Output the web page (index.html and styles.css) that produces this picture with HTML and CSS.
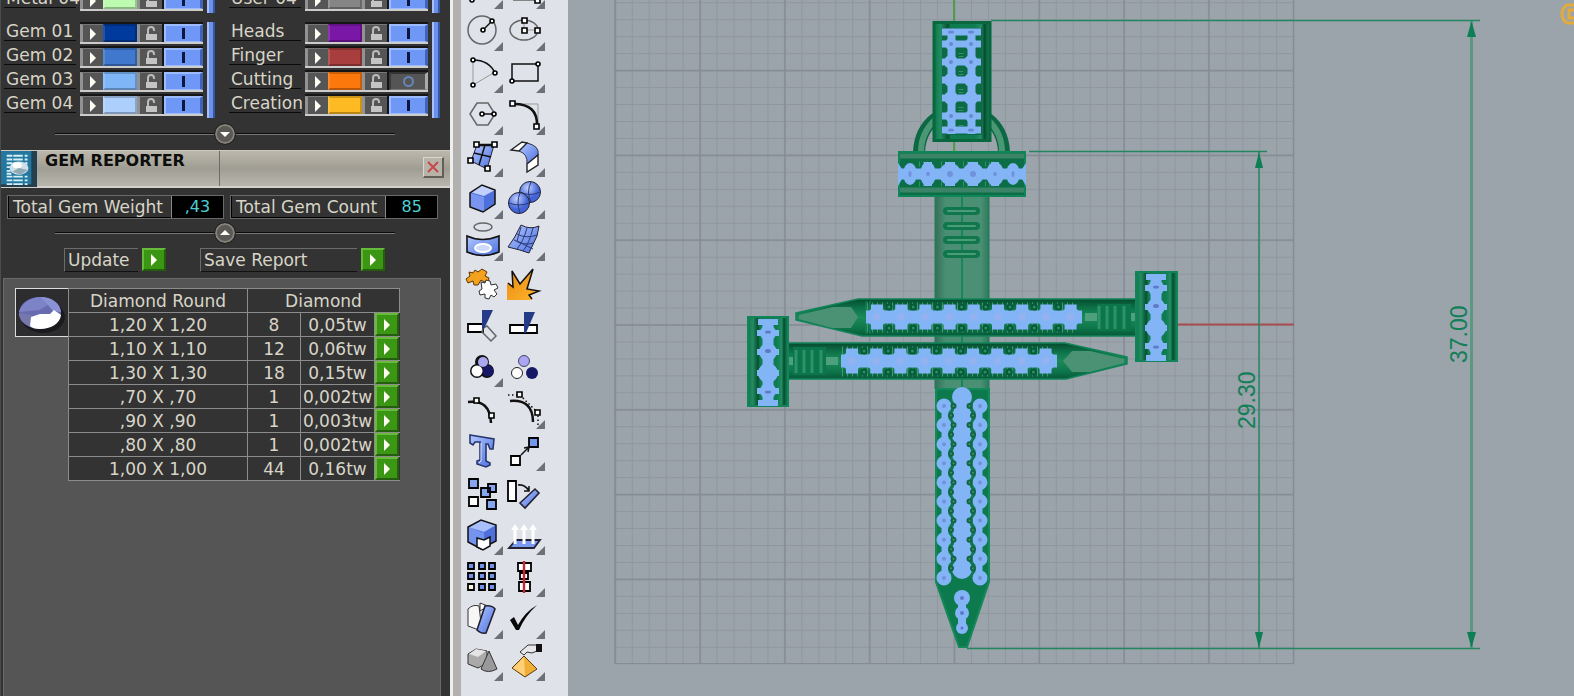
FILE: index.html
```html
<!DOCTYPE html>
<html lang="en">
<head>
<meta charset="utf-8">
<title>Gem Reporter</title>
<link rel="stylesheet" href="styles.css">
</head>
<body>
<svg class="defs" aria-hidden="true">
  <symbol id="lock" viewBox="0 0 14 16"><path d="M4 8V4a3 3 0 0 1 6 0v1" fill="none" stroke="#bbb" stroke-width="2"/><path d="M2 8h11v6H2z" fill="#c4c4c4"/></symbol>
  <symbol id="tri" viewBox="0 0 8 12"><path d="M1 0l6 6-6 6z" fill="#fffff4"/></symbol>
  <linearGradient id="blue" x2="1" y2="1"><stop offset="0" stop-color="#b4c8ff"/><stop offset="1" stop-color="#4a6fe0"/></linearGradient>
  <linearGradient id="gold" x2="1" y2="1"><stop offset="0" stop-color="#e98a14"/><stop offset="1" stop-color="#ffb52a"/></linearGradient>
  <radialGradient id="ball" cx=".4" cy=".3"><stop offset="0" stop-color="#c3d2ff"/><stop offset="1" stop-color="#4163d6"/></radialGradient>
</svg>
<div class="app">
  <aside class="panel">
    <section class="layers">
      <div class="col">
        <div class="group">
          <div class="rows">
            <div class="row"><span class="name">Metal 04</span><div class="ctl"><button class="key" aria-label="Select Metal 04"><svg><use href="#tri"/></svg></button><button class="swatch mint" aria-label="Metal 04 colour"></button><button class="key lock" aria-label="Lock Metal 04"><svg><use href="#lock"/></svg></button><button class="toggle" aria-label="Show Metal 04"><i></i></button></div></div>
          </div><span class="bar"></span>
        </div>
        <div class="group">
          <div class="rows">
            <div class="row"><span class="name">Gem 01</span><div class="ctl"><button class="key" aria-label="Select Gem 01"><svg><use href="#tri"/></svg></button><button class="swatch navy" aria-label="Gem 01 colour"></button><button class="key lock" aria-label="Lock Gem 01"><svg><use href="#lock"/></svg></button><button class="toggle" aria-label="Show Gem 01"><i></i></button></div></div>
            <div class="row"><span class="name">Gem 02</span><div class="ctl"><button class="key" aria-label="Select Gem 02"><svg><use href="#tri"/></svg></button><button class="swatch royal" aria-label="Gem 02 colour"></button><button class="key lock" aria-label="Lock Gem 02"><svg><use href="#lock"/></svg></button><button class="toggle" aria-label="Show Gem 02"><i></i></button></div></div>
            <div class="row"><span class="name">Gem 03</span><div class="ctl"><button class="key" aria-label="Select Gem 03"><svg><use href="#tri"/></svg></button><button class="swatch sky" aria-label="Gem 03 colour"></button><button class="key lock" aria-label="Lock Gem 03"><svg><use href="#lock"/></svg></button><button class="toggle" aria-label="Show Gem 03"><i></i></button></div></div>
            <div class="row"><span class="name">Gem 04</span><div class="ctl"><button class="key" aria-label="Select Gem 04"><svg><use href="#tri"/></svg></button><button class="swatch pale" aria-label="Gem 04 colour"></button><button class="key lock" aria-label="Lock Gem 04"><svg><use href="#lock"/></svg></button><button class="toggle" aria-label="Show Gem 04"><i></i></button></div></div>
          </div><span class="bar"></span>
        </div>
      </div>
      <div class="col">
        <div class="group">
          <div class="rows">
            <div class="row"><span class="name">User 04</span><div class="ctl"><button class="key" aria-label="Select User 04"><svg><use href="#tri"/></svg></button><button class="swatch gray" aria-label="User 04 colour"></button><button class="key lock" aria-label="Lock User 04"><svg><use href="#lock"/></svg></button><button class="toggle" aria-label="Show User 04"><i></i></button></div></div>
          </div><span class="bar"></span>
        </div>
        <div class="group">
          <div class="rows">
            <div class="row"><span class="name">Heads</span><div class="ctl"><button class="key" aria-label="Select Heads"><svg><use href="#tri"/></svg></button><button class="swatch purple" aria-label="Heads colour"></button><button class="key lock" aria-label="Lock Heads"><svg><use href="#lock"/></svg></button><button class="toggle" aria-label="Show Heads"><i></i></button></div></div>
            <div class="row"><span class="name">Finger</span><div class="ctl"><button class="key" aria-label="Select Finger"><svg><use href="#tri"/></svg></button><button class="swatch brick" aria-label="Finger colour"></button><button class="key lock" aria-label="Lock Finger"><svg><use href="#lock"/></svg></button><button class="toggle" aria-label="Show Finger"><i></i></button></div></div>
            <div class="row"><span class="name">Cutting</span><div class="ctl"><button class="key" aria-label="Select Cutting"><svg><use href="#tri"/></svg></button><button class="swatch orange" aria-label="Cutting colour"></button><button class="key lock" aria-label="Lock Cutting"><svg><use href="#lock"/></svg></button><button class="toggle off" aria-label="Show Cutting"><i></i></button></div></div>
            <div class="row"><span class="name">Creation</span><div class="ctl"><button class="key" aria-label="Select Creation"><svg><use href="#tri"/></svg></button><button class="swatch amber" aria-label="Creation colour"></button><button class="key lock" aria-label="Lock Creation"><svg><use href="#lock"/></svg></button><button class="toggle" aria-label="Show Creation"><i></i></button></div></div>
          </div><span class="bar"></span>
        </div>
      </div>
    </section>
    <div class="divider"><button class="knob" aria-label="Expand layers"><svg viewBox="0 0 16 16"><path d="M3 6h10l-5 5z" fill="#fffff4"/></svg></button></div>

    <header class="title">
      <svg class="logo" viewBox="0 0 38 38"><path d="M0 0h38v38H0z" fill="#24789f"/><path d="M32 0h6v38H0v-3h32z" fill="#24404f"/><path d="M6 5h22M6 9h22M6 13h22M6 27h22M6 31h22M6 35h22" stroke="#d4f0f8" stroke-width="2" stroke-dasharray="6 1 10 2"/><path d="M6 17h5M6 21h4M6 24h5" stroke="#d4f0f8" stroke-width="2"/><ellipse cx="19" cy="18" rx="10" ry="7" fill="#cfdfe6"/><ellipse cx="17" cy="15" rx="5" ry="3" fill="#fff"/><path d="M12 22l7-4 9 2-7 5z" fill="#8fa9b5"/></svg>
      <h1>GEM REPORTER</h1>
      <button class="close" aria-label="Close"><svg viewBox="0 0 18 18"><path d="M4 4l10 10M14 4L4 14" stroke="#c8474c" stroke-width="2"/></svg></button>
    </header>
    <div class="stats">
      <div class="stat"><span>Total Gem Weight</span><output>,43</output></div>
      <div class="stat"><span>Total Gem Count</span><output>85</output></div>
    </div>
    <div class="divider low"><button class="knob" aria-label="Collapse totals"><svg viewBox="0 0 16 16"><path d="M3 10h10l-5-5z" fill="#fffff4"/></svg></button></div>
    <div class="actions">
      <label class="act" for="update">Update</label><button class="play" id="update"><svg><use href="#tri"/></svg></button>
      <label class="act wide" for="save">Save Report</label><button class="play" id="save"><svg><use href="#tri"/></svg></button>
    </div>
    <section class="report">
      <div class="thumb"><svg viewBox="0 0 50 46"><ellipse cx="27" cy="28" rx="22" ry="16" fill="#1b1b1f"/><ellipse cx="24" cy="24" rx="21" ry="16" fill="#686bb0"/><path d="M3 23c3-9 10-14 21-15l8 8-9 5z" fill="#7c83c6"/><path d="M24 8c12 0 20 6 21 15l-8-1-5-6z" fill="#8a93d6"/><path d="M3 24l13 2v12C8 36 3 31 3 24z" fill="#7478ac"/><path d="M15 28l9-3 10 0 4-4 7 5c-1 9-11 14-21 14-5 0-8-1-10-3z" fill="#fff"/></svg></div>
      <table>
        <colgroup><col class="c1"><col class="c2"><col class="c3"><col class="c4"></colgroup>
        <thead><tr><th>Diamond Round</th><th colspan="3">Diamond</th></tr></thead>
        <tbody>
          <tr><td>1,20 X 1,20</td><td>8</td><td>0,05tw</td><td class="go"><button class="play" aria-label="Show 1,20"><svg><use href="#tri"/></svg></button></td></tr>
          <tr><td>1,10 X 1,10</td><td>12</td><td>0,06tw</td><td class="go"><button class="play" aria-label="Show 1,10"><svg><use href="#tri"/></svg></button></td></tr>
          <tr><td>1,30 X 1,30</td><td>18</td><td>0,15tw</td><td class="go"><button class="play" aria-label="Show 1,30"><svg><use href="#tri"/></svg></button></td></tr>
          <tr><td>,70 X ,70</td><td>1</td><td>0,002tw</td><td class="go"><button class="play" aria-label="Show ,70"><svg><use href="#tri"/></svg></button></td></tr>
          <tr><td>,90 X ,90</td><td>1</td><td>0,003tw</td><td class="go"><button class="play" aria-label="Show ,90"><svg><use href="#tri"/></svg></button></td></tr>
          <tr><td>,80 X ,80</td><td>1</td><td>0,002tw</td><td class="go"><button class="play" aria-label="Show ,80"><svg><use href="#tri"/></svg></button></td></tr>
          <tr><td>1,00 X 1,00</td><td>44</td><td>0,16tw</td><td class="go"><button class="play" aria-label="Show 1,00"><svg><use href="#tri"/></svg></button></td></tr>
        </tbody>
      </table>
    </section>
  </aside>

  <nav class="tools" aria-label="Modelling tools">
    <button class="fly" aria-label="Curve"><svg viewBox="0 0 42 42"><path d="M11 32C18 22 24 26 30 16" class="l"/><circle cx="11" cy="33" r="2" class="n"/></svg></button>
    <button class="fly" aria-label="Arc"><svg viewBox="0 0 42 42"><path d="M10 33h25" class="t"/><path d="M32 31h5v5h-5z" class="n"/></svg></button>
    <button class="fly" aria-label="Circle"><svg viewBox="0 0 42 42"><circle cx="21" cy="21" r="14" class="t"/><path d="M22 21l9-9" class="m"/><circle cx="22" cy="21" r="2" class="n"/><circle cx="31" cy="12" r="2" class="n"/></svg></button>
    <button class="fly" aria-label="Ellipse"><svg viewBox="0 0 42 42"><ellipse cx="21" cy="21" rx="14" ry="10" class="t"/><path d="M21 21V11M21 21h14" class="t2"/><path d="M19 19h5v5h-5zM19 9h5v5h-5zM32 19h5v5h-5z" class="n"/></svg></button>
    <button class="fly" aria-label="Arc from centre"><svg viewBox="0 0 42 42"><path d="M12 9v25l22-13" class="t2"/><path d="M12 9q16 0 22 13" class="m"/><circle cx="12" cy="9" r="2" class="n"/><circle cx="12" cy="34" r="2" class="n"/><circle cx="34" cy="22" r="2" class="n"/></svg></button>
    <button class="fly" aria-label="Rectangle"><svg viewBox="0 0 42 42"><path d="M9 13h26v17H9z" class="m"/><circle cx="9" cy="30" r="2" class="n"/><circle cx="35" cy="13" r="2" class="n"/></svg></button>
    <button class="fly" aria-label="Polygon"><svg viewBox="0 0 42 42"><path d="M9 21l7-11h11l7 11-7 11H16z" class="t"/><path d="M21 21h12" class="m"/><circle cx="21" cy="21" r="2" class="n"/><circle cx="33" cy="21" r="2" class="n"/></svg></button>
    <button class="fly" aria-label="Fillet"><svg viewBox="0 0 42 42"><path d="M12 11h23v22" class="t2"/><path d="M11 11q24 0 23 22" class="b"/><path d="M7 8h5v5H7zM31 31h5v5h-5z" class="n"/></svg></button>
    <button class="fly" aria-label="Surface from points"><svg viewBox="0 0 42 42"><path d="M16 10h17l-7 24-16-8z" fill="url(#blue)" stroke="#223"/><path d="M24 10l-6 20M13 18l17 4" class="m"/><path d="M15 10h18" class="b"/><path d="M13 7h5v5h-5zM31 7h5v5h-5zM7 23h5v5H7zM24 31h5v5h-5z" class="n"/></svg></button>
    <button class="fly" aria-label="Loft"><svg viewBox="0 0 42 42"><path d="M16 16l8-8q13 3 11 12l-11 9q1-10-8-13z" fill="url(#blue)" stroke="#334"/><path d="M8 15l11-8 5 1-8 8z" fill="#fff" stroke="#222" stroke-width="1.4"/><path d="M24 29l11-9v10l-11 7z" fill="#fff" stroke="#222" stroke-width="1.4"/></svg></button>
    <button class="fly" aria-label="Box"><svg viewBox="0 0 42 42"><path d="M9 16v14l12 5 13-8V14L21 8z" fill="#4e70dd"/><path d="M9 15l14 4 11-6-13-5z" fill="#c2d0fc"/><path d="M9 16l14 4v15L9 30z" fill="#7995f0"/><path d="M9 16v14l13 5 12-8V13L21 8z" class="m"/></svg></button>
    <button class="fly" aria-label="Spheres"><svg viewBox="0 0 42 42"><circle cx="27" cy="15" r="10.5" fill="url(#ball)" stroke="#223"/><path d="M17 15q10 5 20 0M28 5q-5 10 0 20" class="g"/><circle cx="16" cy="26" r="10.500" fill="url(#ball)" stroke="#223"/><path d="M6 26q10 4 20 0M17 16q-4 9 0 20" class="g"/></svg></button>
    <button class="fly" aria-label="Project"><svg viewBox="0 0 42 42"><ellipse cx="22" cy="8" rx="9" ry="4" class="t"/><path d="M6 17q15 7 32 0v16q-16 7-32 0z" fill="url(#blue)" stroke="#111" stroke-width="1.6"/><ellipse cx="22" cy="29" rx="8" ry="4" fill="#cddafd" stroke="#fff" stroke-width="2"/></svg></button>
    <button class="fly" aria-label="Mesh"><svg viewBox="0 0 42 42"><path d="M18 6q9 5 18 1l-2 10-8 17q-8-3-21-6 7-9 13-22z" fill="url(#blue)" stroke="#223"/><path d="M14 15q9 5 20 1M11 21q10 6 19 3M24 9q-4 14-10 21M30 9q-4 16-10 23M18 8l-4 14 16 8" class="g"/></svg></button>
    <button aria-label="Join"><svg viewBox="0 0 42 42"><path d="M14 9l3 2 4-3 5 3-2 4 4 2-1 4-4 0-3-2-3 5-4 0-1-4-5 2-2-4 4-3-1-4 4 1z" fill="#f4a11e" stroke="#5a3500"/><path d="M20 21l4 1 1-3 4 1 1 4 5-1 2 4-4 2 3 4-3 3-3-2-2 4-4-1 0-4-5 1-1-4 3-2z" fill="#fff" stroke="#333"/></svg></button>
    <button aria-label="Explode"><svg viewBox="0 0 42 42"><path d="M4 39V22l6 4-1-16 8 13 13-15-6 20 12 2-10 4 3 5z" fill="url(#gold)"/><path d="M5 22l5 4-1-16 8 13 13-15-6 20 12 2-10 4 3 4" class="m"/></svg></button>
    <button aria-label="Trim"><svg viewBox="0 0 42 42"><path d="M7 21h15v8H7z" fill="#fff" stroke="#000" stroke-width="1.8"/><path d="M22 25l4-2 9 10-5 5-9-9z" class="t"/><path d="M21 7h11l-9 19-2-1z" fill="#253b88"/></svg></button>
    <button aria-label="Split"><svg viewBox="0 0 42 42"><path d="M7 22h27v8H7z" fill="#fff" stroke="#000" stroke-width="1.8"/><path d="M21 9h11l-9 21h-2z" fill="#253b88"/></svg></button>
    <button class="fly" aria-label="Boolean union"><svg viewBox="0 0 42 42"><g stroke="#111" stroke-width="4"><circle cx="21" cy="17" r="5"/><circle cx="16" cy="26" r="5"/><circle cx="26" cy="26" r="5"/></g><circle cx="27" cy="26" r="5.500" fill="#171768"/><circle cx="16" cy="26" r="5.500" fill="#fff"/><circle cx="22" cy="17" r="5" fill="#aaa6f2"/></svg></button>
    <button aria-label="Boolean split"><svg viewBox="0 0 42 42"><circle cx="21" cy="16" r="5.5" fill="#aaa6f2" stroke="#446"/><circle cx="14" cy="28" r="5.5" fill="#fff" stroke="#222"/><circle cx="29" cy="28" r="6" fill="#171768"/></svg></button>
    <button aria-label="Edit points"><svg viewBox="0 0 42 42"><path d="M7 15q22-3 23 21" class="b"/><path d="M13 11h5v5h-5zM28 26h5v5h-5z" class="n"/></svg></button>
    <button class="fly" aria-label="Control points"><svg viewBox="0 0 42 42"><path d="M7 14q23-2 23 21" class="b"/><path d="M5 8h12l18 18v12" class="m" stroke-dasharray="1.5 2.5"/><path d="M14 5h5v5h-5zM32 23h5v5h-5z" class="n"/></svg></button>
    <button aria-label="Text object"><svg viewBox="0 0 42 42"><path d="M9 6l24 4-1 10h-3l-2-5h-2v17l4 2v2l-4 2-9-3v-3l3-1V13h-5l-2 3-3-2z" fill="url(#blue)" stroke="#26376e" stroke-width="1.6"/><path d="M20 14v18l-2 2" stroke="#dfe6ff" fill="none"/></svg></button>
    <button class="fly" aria-label="Move"><svg viewBox="0 0 42 42"><path d="M8 27h9v9H8z" fill="#fff" stroke="#000" stroke-width="1.8"/><path d="M26 9h9v9h-9z" fill="#7397ed" stroke="#000" stroke-width="1.8"/><path d="M18 26l8-8M21 19l5-1-1 5" class="m"/></svg></button>
    <button aria-label="Copy"><svg viewBox="0 0 42 42"><g fill="#86a5ee" stroke="#000" stroke-width="1.8"><path d="M8 8h9v9H8zM27 13h8v8h-8zM20 17h9v9h-9zM26 29h9v9h-9z"/><path d="M8 26h9v9H8z" fill="#fff"/></g></svg></button>
    <button aria-label="Rotate"><svg viewBox="0 0 42 42"><path d="M5 10h8v20H5z" fill="#fff" stroke="#000" stroke-width="1.8"/><path d="M17 32l15-14 4 4-14 15z" fill="url(#blue)" stroke="#223" stroke-width="1.6"/><path d="M15 14q7-1 11 6M26 15v5l-5 0" class="m"/></svg></button>
    <button class="fly" aria-label="Solid edit"><svg viewBox="0 0 42 42"><path d="M7 14v15l13 7 15-8V12L20 7z" fill="#4e70dd"/><path d="M7 14l16 5 12-7-15-5z" fill="#a9bffc"/><path d="M7 14l16 6v15L7 29z" fill="#7594ef"/><path d="M7 14v15l13 7 15-8V12L20 7z" class="m"/><path d="M16 25l7 2 6-3v9l-7 4-6-3z" fill="#fff" stroke="#111" stroke-width="1.5"/></svg></button>
    <button class="fly" aria-label="Extrude"><svg viewBox="0 0 42 42"><path d="M6 35l7-8h24l-6 8z" fill="#7a9af0" stroke="#223" stroke-width="1.8"/><path d="M12 31V14M21 31V14M30 31V14" stroke="#fff" stroke-width="3"/><path d="M8 17l4-6 4 6zM17 17l4-6 4 6zM26 17l4-6 4 6z" fill="#fff"/></svg></button>
    <button class="fly" aria-label="Array"><svg viewBox="0 0 42 42"><g fill="#7192e8" stroke="#000" stroke-width="1.8"><path d="M7 8h6v6H7zM18 8h6v6h-6zM28 8h6v6h-6zM7 18h6v6H7zM18 18h6v6h-6zM28 18h6v6h-6zM18 29h6v6h-6zM28 29h6v6h-6z"/><path d="M7 29h6v6H7z" fill="#fff3e0"/></g></svg></button>
    <button class="fly" aria-label="Align"><svg viewBox="0 0 42 42"><path d="M15 8h13v8H15zM17 18h8v6h-8zM16 27h11v9H16z" fill="#fff" stroke="#000" stroke-width="1.8"/><path d="M21 6v32" stroke="#c92634" stroke-width="2.4"/></svg></button>
    <button class="fly" aria-label="Cage edit"><svg viewBox="0 0 42 42"><path d="M7 12q5-5 11-3l2 17-2 7-11-4z" fill="#f7f7f7" stroke="#333"/><path d="M19 6l8 3-8 5z" fill="#fff" stroke="#333"/><path d="M24 9q7-1 10 3l-9 24q-5 1-9-3z" fill="url(#blue)" stroke="#223" stroke-width="1.6"/></svg></button>
    <button class="fly" aria-label="Check"><svg viewBox="0 0 42 42"><path d="M7 23l4-3 4 8Q22 15 34 8 22 19 16 33h-3z" fill="#080808"/></svg></button>
    <button class="fly" aria-label="Render"><svg viewBox="0 0 42 42"><path d="M7 15l8-5 11 2v12l-9 5-10-4z" fill="#aaa" stroke="#333"/><path d="M8 15l9 3 8-6-10-2z" fill="#e4e4e4"/><path d="M28 12l-8 18q7 5 16 0z" fill="#999" stroke="#333"/></svg></button>
    <button class="fly" aria-label="Drag"><svg viewBox="0 0 42 42"><path d="M21 17l13 13-12 8-13-9z" fill="#f1ae36" stroke="#553c13"/><path d="M21 18l1 19-12-8z" fill="#ffd077"/><path d="M17 13l8-7 9 0v6l-5 2-5-1-3 3z" fill="#e7e7ea" stroke="#333"/><path d="M33 5h6v8h-6z" fill="#111"/></svg></button>
  </nav>

  <main class="view">
    <svg viewBox="568 0 1006 696" preserveAspectRatio="xMinYMin slice" role="img" aria-label="Top viewport">
      <defs>
        <pattern id="minor" x="954" y="324.5" width="16.96" height="16.96" patternUnits="userSpaceOnUse"><path d="M.5 0v17M0 .5h17" stroke="#8f969f" fill="none"/></pattern>
        <pattern id="major" x="953.5" y="324" width="84.8" height="84.8" patternUnits="userSpaceOnUse"><path d="M1 0v85M0 1h85" stroke="#858b94" stroke-width="1.4" fill="none"/></pattern>
        <linearGradient id="shaft"><stop offset="0" stop-color="#326f57"/><stop offset=".2" stop-color="#4a8f74"/><stop offset=".85" stop-color="#4b8f75"/><stop offset="1" stop-color="#2c7a5a"/></linearGradient>
        <linearGradient id="tubeV" x2="0" y2="1"><stop offset="0" stop-color="#064a2e"/><stop offset=".25" stop-color="#0d7449"/><stop offset=".5" stop-color="#1c8a5b"/><stop offset=".8" stop-color="#0d7449"/><stop offset="1" stop-color="#075837"/></linearGradient>
        <linearGradient id="tubeH"><stop offset="0" stop-color="#0c7549"/><stop offset=".12" stop-color="#238c62"/><stop offset=".25" stop-color="#06502f"/><stop offset=".3" stop-color="#0e7c50"/><stop offset=".72" stop-color="#0e7c50"/><stop offset=".84" stop-color="#238c62"/><stop offset=".9" stop-color="#064d30"/><stop offset="1" stop-color="#15895a"/></linearGradient>
        <g id="nailgems"><path d="M867 307h210M867 328h210" stroke="#3f9a74" stroke-width="9" stroke-dasharray="1 4"/><path d="M866 317h216" stroke="#82b4f6" stroke-width="13"/><path d="M871 317h207" stroke="#82b4f6" stroke-width="25" stroke-dasharray="12 12.2"/><path d="M877 317h195" stroke="#82b4f6" stroke-width="20" stroke-linecap="round" stroke-dasharray="0 24.2"/><path d="M877 317h195" stroke="#93b2ef" stroke-width="8" stroke-linecap="round" stroke-dasharray="0 24.2"/><path d="M889 307h175M889 328h175" stroke="#075a39" stroke-width="7" stroke-linecap="round" stroke-dasharray="0 24.2"/><path d="M889 307h175M889 328h175" stroke="#2c8c66" stroke-width="3" stroke-linecap="round" stroke-dasharray="0 24.2"/></g>
        <g id="headgems"><path d="M1156 274v84" stroke="#82b4f6" stroke-width="11"/><path d="M1146 277h20M1145 288h22M1145 307h22M1145 328h22M1145 346h22M1146 358h20" stroke="#82b4f6" stroke-width="6"/><g fill="#82b4f6"><circle cx="1156" cy="288" r="8"/><circle cx="1156" cy="307" r="9"/><circle cx="1156" cy="328" r="10"/><circle cx="1156" cy="346" r="8"/></g><g fill="#6179c9"><ellipse cx="1156" cy="287" rx="3" ry="1.5"/><ellipse cx="1156" cy="306" rx="3" ry="2"/><ellipse cx="1156" cy="347" rx="3" ry="1.5"/></g></g>
      </defs>
      <path d="M614.8 0h679v663.7h-679z" fill="url(#minor)"/>
      <path d="M614.8 0h679v663.7h-679z" fill="url(#major)"/>
      <path d="M614.8 0v663.7h679V0" fill="none" stroke="#848b94"/>
      <path d="M954 0v324" stroke="#4c9e48" stroke-width="2"/>
      <path d="M954 324.500h340" stroke="#a94e50" stroke-width="2"/>

      <g fill="none"><path d="M936 118q-16 12-17 34M987 118q16 12 17 34" stroke="#0c6843" stroke-width="12"/><path d="M935 120q-14 13-14 32M988 120q14 13 14 32" stroke="#4a9776" stroke-width="6"/></g>
      <path d="M934 22.500h56v118h-56z" fill="url(#tubeH)" stroke="#08673f" stroke-width="3"/>
      <path d="M942 28h40v107h-40z" fill="#0c6b44"/>
      <path d="M951.500 29v105M971.500 29v105" stroke="#82b4f6" stroke-width="8"/>
      <path d="M942 32h39M942 44h39M942 62h39M942 80h39M942 98h39M942 116h39M942 130h39" stroke="#82b4f6" stroke-width="7"/>
      <g fill="#82b4f6"><circle cx="951" cy="44" r="6"/><circle cx="971" cy="44" r="6"/><circle cx="951" cy="62" r="7"/><circle cx="971" cy="62" r="7"/><circle cx="951" cy="80" r="7"/><circle cx="971" cy="80" r="7"/><circle cx="951" cy="98" r="7"/><circle cx="971" cy="98" r="7"/><circle cx="951" cy="116" r="6"/><circle cx="971" cy="116" r="6"/></g>
      <path d="M961 53v75" stroke="#31906a" stroke-width="5" stroke-dasharray="1 2 1 14"/>
      <g fill="#6b87d3"><ellipse cx="951" cy="32" rx="3" ry="1.500"/><ellipse cx="971" cy="32" rx="3" ry="1.500"/><circle cx="951" cy="44" r="2"/><circle cx="971" cy="44" r="2"/><circle cx="951" cy="62" r="2"/><circle cx="971" cy="62" r="2"/><circle cx="951" cy="116" r="2"/><circle cx="971" cy="116" r="2"/><ellipse cx="951" cy="130" rx="3" ry="1.500"/><ellipse cx="971" cy="130" rx="3" ry="1.500"/></g>

      <path d="M935 196h54v193h-54z" fill="url(#shaft)" stroke="#1d7c57"/>
      <path d="M962 196v193" stroke="#18855a" stroke-width="2"/>
      <path d="M947 211h29M947 226h29M947 240h29M947 254h29" stroke="#10764c" stroke-width="8" stroke-linecap="round"/>
      <path d="M948 211h27M948 226h27M948 240h27M948 254h27" stroke="#4b9b78" stroke-width="2" stroke-linecap="round"/>
      <path d="M899 152h126v44H899z" fill="#0b6e46" stroke="#0f8657" stroke-width="2"/>
      <path d="M900 156h124M900 190h124" stroke="#3b8467" stroke-width="5"/>
      <path d="M898 174h128" stroke="#82b4f6" stroke-width="11"/>
      <path d="M919 164h88M919 184h88" stroke="#348f6b" stroke-width="5" stroke-dasharray="1 3 1 3 1 13"/>
      <g fill="#82b4f6"><ellipse cx="910" cy="174" rx="7" ry="11"/><ellipse cx="928" cy="174" rx="8" ry="12"/><circle cx="950" cy="174" r="11"/><circle cx="973" cy="174" r="11"/><ellipse cx="995" cy="174" rx="9" ry="12"/><ellipse cx="1013" cy="174" rx="7" ry="11"/><path d="M945 162h10v24h-10zM968 162h10v24h-10zM924 162h8v24h-8zM991 162h8v24h-8zM898 163l4 6v10l-4 7zM1026 163l-4 6v10l4 7z"/></g>
      <g fill="#7092dd"><ellipse cx="910" cy="174" rx="1.500" ry="3"/><circle cx="928" cy="174" r="2"/><circle cx="950" cy="174" r="3"/><circle cx="973" cy="174" r="3"/><circle cx="995" cy="174" r="2"/><ellipse cx="1013" cy="174" rx="1.500" ry="3"/></g>

      <path d="M796 313l62-14h278v37H862l-66-16z" fill="url(#tubeV)" stroke="#12845a" stroke-width="1.500"/>
      <path d="M799 315l34-8h18l7 10-7 11h-19l-33-9z" fill="#4b9274"/>
      <path d="M1085 317h50" stroke="#4ca17c" stroke-width="8"/><path d="M1097 304h34v27h-34z" fill="#0d754a"/><path d="M1099 306v23M1107 306v23M1115 306v23M1124 306v23" stroke="#2a9468" stroke-width="3"/>
      <path d="M866 301v33M870 301v33" stroke="#18865a"/>
      <use href="#nailgems"/>
      <path d="M1136 272h41v89h-41z" fill="url(#tubeH)" stroke="#11845a" stroke-width="2"/>
      <use href="#headgems"/>

      <path d="M1127 357l-62-14H788v36h278l61-15z" fill="url(#tubeV)" stroke="#12845a" stroke-width="1.500"/>
      <path d="M1124 359l-34-8h-18l-9 10 9 11h18l34-9z" fill="#4b9274"/>
      <path d="M788 361h50" stroke="#4ca17c" stroke-width="8"/><path d="M793 347h33v28h-33z" fill="#0d754a"/><path d="M796 350v23M804 350v23M812 350v23M821 350v23" stroke="#2a9468" stroke-width="3"/>
      <use href="#nailgems" x="-25" y="44"/>
      <path d="M748 317h40v89h-40z" fill="url(#tubeH)" stroke="#11845a" stroke-width="2"/>
      <use href="#headgems" x="-388" y="45"/>

      <path d="M936 389h53v193l-22 65h-8l-23-65z" fill="#0d7a4e" stroke="#14895b" stroke-width="2"/>
      <path d="M962 397v173" stroke="#82b4f6" stroke-width="13" stroke-linecap="round"/>
      <path d="M962 397v174" stroke="#82b4f6" stroke-width="20" stroke-linecap="round" stroke-dasharray="0 19.100"/>
      <path d="M944 406v173M980 406v173" stroke="#82b4f6" stroke-width="15" stroke-linecap="round" stroke-dasharray="0 19.100"/>
      <path d="M945 406v173M979 406v173" stroke="#82b4f6" stroke-width="7"/>
      <path d="M962 406v155" stroke="#82b4f6" stroke-width="16"/>
      <path d="M944 406v173M980 406v173" stroke="#7092dd" stroke-width="4" stroke-linecap="round" stroke-dasharray="0 19.100"/>
      <path d="M953.500 406v155M969.500 406v155M951 415.500v155M973 415.500v155" stroke="#136546" stroke-width="6" stroke-linecap="round" stroke-dasharray="0 19.100"/>
      <path d="M953.500 406v155M969.500 406v155M951 415.500v155M973 415.500v155" stroke="#3b9670" stroke-width="2" stroke-linecap="round" stroke-dasharray="0 19.100"/>
      <path d="M962 598v30" stroke="#82b4f6" stroke-width="8"/>
      <path d="M955 594h14v8h-14z" fill="#82b4f6"/>
      <g fill="#82b4f6"><circle cx="962" cy="598" r="8"/><circle cx="962" cy="613" r="7"/><circle cx="962" cy="628" r="6"/></g>
      <g fill="#5d78ca"><circle cx="962" cy="598" r="2"/><circle cx="962" cy="613" r="2"/><circle cx="962" cy="628" r="1.500"/></g>

      <g stroke="#248660" stroke-width="1.500"><path d="M991 20.500h489M1029 151.500h238M967 648.500h513"/><path d="M1259 152v496"/><path d="M1471.500 21v627" stroke="#5a9880" stroke-width="3"/></g>
      <path d="M1259 152l4 16h-8zM1259 648l4-16h-8zM1471.500 21l4.500 16h-9zM1471.500 648l4.500-16h-9z" fill="#0e7f55"/>
      <text class="dim" transform="translate(1255 429) rotate(-90)">29.30</text>
      <text class="dim" transform="translate(1467 363) rotate(-90)">37.00</text>
      <path d="M1574 5h-7q-5 3-5 9 0 6 5 9h7M1574 10h-5v8h5" fill="none" stroke="#e3ac3a" stroke-width="3"/>
    </svg>
  </main>
</div>
</body>
</html>
```
FILE: styles.css
```css
* { box-sizing: border-box; }
body { margin: 0; background: #9ba3ab; font-family: "DejaVu Sans", Verdana, sans-serif; font-size: 17px; color: #d8d5c8; }
button { padding: 0; margin: 0; border: 0; font: inherit; display: block; }
.defs { position: absolute; width: 0; height: 0; }
.app { display: flex; height: 100vh; overflow: hidden; background: #efeeee; }

.panel { flex: none; width: 450px; display: flex; flex-direction: column; background: #333; border-left: 1px solid #4c4c4c; }
.layers { display: flex; gap: 14px; margin-top: -11px; padding-left: 3px; }
.col { display: flex; flex-direction: column; gap: 9px; }
.group { display: flex; gap: 4px; }
.row { display: flex; gap: 4px; height: 24px; }
.name { width: 72px; height: 19px; line-height: 18px; padding-left: 2px; border-bottom: 1px solid #0b0b0b; white-space: nowrap; }
.ctl { display: flex; height: 22px; border-top: 2px solid #151515; border-bottom: 2px solid #ccc; background: #151515; }
.key { width: 23px; height: 100%; display: grid; place-items: center; background: #555; border-left: 3px solid #929292; border-top: 1px solid #777; }
.key svg { width: 8px; height: 12px; }
.swatch { width: 34px; height: 100%; border: 2px solid; border-color: #0003 #0003 #0004 #fff2; }
.lock { width: 25px; margin-right: 2px; }
.lock svg { width: 14px; height: 16px; }
.toggle { width: 39px; height: 100%; display: grid; place-items: center; background: #6f98f6; border: solid #9dbcff; border-width: 2px 3px 1px 2px; border-right-color: #3f64b8; }
.toggle i { width: 3px; height: 11px; background: #0b1740; }
.toggle.off { background: #555; border-color: #333 #aaa #777 #3a3a3a; }
.toggle.off i { width: 11px; height: 11px; border: 2px solid #6486b8; border-radius: 50%; background: none; }
.bar { width: 8px; background: #6c91ea; border-left: 2px solid #a7c0fb; border-right: 2px solid #3457a6; }
.mint { background-color: #bdfcb0; }
.navy { background-color: #003a9c; }
.royal { background-color: #3f78cd; }
.sky { background-color: #7eb6f8; }
.pale { background-color: #adcffc; }
.gray { background-color: #858585; }
.purple { background-color: #7b17a6; }
.brick { background-color: #a83e3e; }
.orange { background-color: #fc780c; }
.amber { background-color: #fdba22; }

.divider { display: grid; place-items: center; height: 20px; margin: 6px 55px 6px 54px; background: linear-gradient(#0b0b0b, #0b0b0b) 0 9px / 100% 1px no-repeat, linear-gradient(#777, #777) 0 10px / 100% 1px no-repeat; }
.divider.low { margin: 4px 55px 2px 54px; }
.knob { width: 20px; height: 20px; border-radius: 50%; background: #5b5955; border: 2px solid #85827a; outline: 1px solid #222; }
.knob svg { display: block; width: 16px; height: 16px; }

.title { display: flex; height: 38px; background: linear-gradient(#bcb8ad, #a09d94 50%, #b9b6ae); border-top: 1px solid #ccc9c0; border-bottom: 2px solid #d4d1ca; }
.logo { width: 36px; height: 36px; }
h1 { flex: none; width: 183px; margin: 0; padding-left: 8px; font-size: 16px; line-height: 19px; color: #0d0d0b; border-right: 1px solid #6f6c65; }
.close { width: 21px; height: 21px; margin: 6px 6px 0 auto; background: #b8b3a8; border: 1px solid #dcd8cf; border-right: 2px solid #625f58; border-bottom: 2px solid #625f58; }
.close svg { display: block; width: 18px; height: 18px; }

.stats { display: flex; gap: 6px; padding: 7px 7px 0 6px; }
.stat { flex: none; display: flex; height: 24px; line-height: 22px; border: 1px solid #696969; }
.stat span { padding: 0 8px 0 4px; border-left: 1px solid #000; border-bottom: 1px solid #000; white-space: nowrap; }
.stat output { width: 52px; text-align: center; background: #000; color: #4cd0d4; font-size: 16px; border-left: 1px solid #888; }
.actions { display: flex; padding: 3px 0 6px 63px; }
.act { width: 74px; height: 24px; padding-left: 3px; line-height: 23px; border: 1px solid #6c6c6c; border-right: 0; border-bottom-color: #111; margin-right: 4px; white-space: nowrap; }
.act.wide { width: 157px; margin-left: 34px; }
.play { display: grid; place-items: center; width: 24px; height: 23px; background: #3b9713; border: 2px solid; border-color: #68ba3d #245f10 #245f10 #68ba3d; }
.play svg { width: 8px; height: 12px; }

.report { flex: 1; display: flex; align-items: flex-start; margin: 0 9px 0 2px; padding: 9px 0 0 11px; background: #555; border: 1px solid #696969; border-bottom: 0; }
.thumb { width: 54px; height: 49px; border: 1px solid #ddd; background: #2d2d30; }
.thumb svg { display: block; width: 50px; height: 46px; }
table { border-collapse: collapse; table-layout: fixed; width: 331px; margin-left: -1px; background: #333; }
.c1 { width: 179px; }
.c2 { width: 53px; }
.c3 { width: 74px; }
.c4 { width: 25px; }
th, td { height: 24px; padding: 0; line-height: 20px; font-weight: 400; text-align: center; border: 1px solid #8c8c8c; white-space: nowrap; }
.go { border-right: 0; }

.tools { flex: none; width: 115px; margin-left: 3px; padding-right: 23px; display: grid; grid-template-columns: 42px 42px; grid-template-rows: 9px; grid-auto-rows: 42px; align-content: start; background: #e0e2ea; border-left: 8px solid #b3b0b0; overflow: hidden; }
.tools button { position: relative; width: 42px; height: 42px; background: none; }
.tools button:nth-child(-n+2) { margin-top: -33px; }
.tools svg { display: block; width: 42px; height: 42px; }
.fly::after { content: ""; position: absolute; right: 0; bottom: 0; width: 9px; height: 9px; background: #6d7077; clip-path: polygon(100% 0, 100% 100%, 0 100%); }
.l, .m, .b, .t, .t2, .g { fill: none; stroke: #111; }
.m { stroke-width: 1.5px; }
.b { stroke-width: 2.5px; }
.t { stroke: #666; stroke-width: 1.5px; }
.t2 { stroke: #999; }
.g { stroke: #2c3a78; }
.n { fill: #fff; stroke: #000; stroke-width: 1.6px; }

.view { flex: 1; min-width: 0; background: #9ba3ab; }
.view svg { display: block; width: 100%; height: 100%; }
.dim { font-family: "Liberation Sans", Arial, sans-serif; font-size: 23px; fill: #118058; }
```
